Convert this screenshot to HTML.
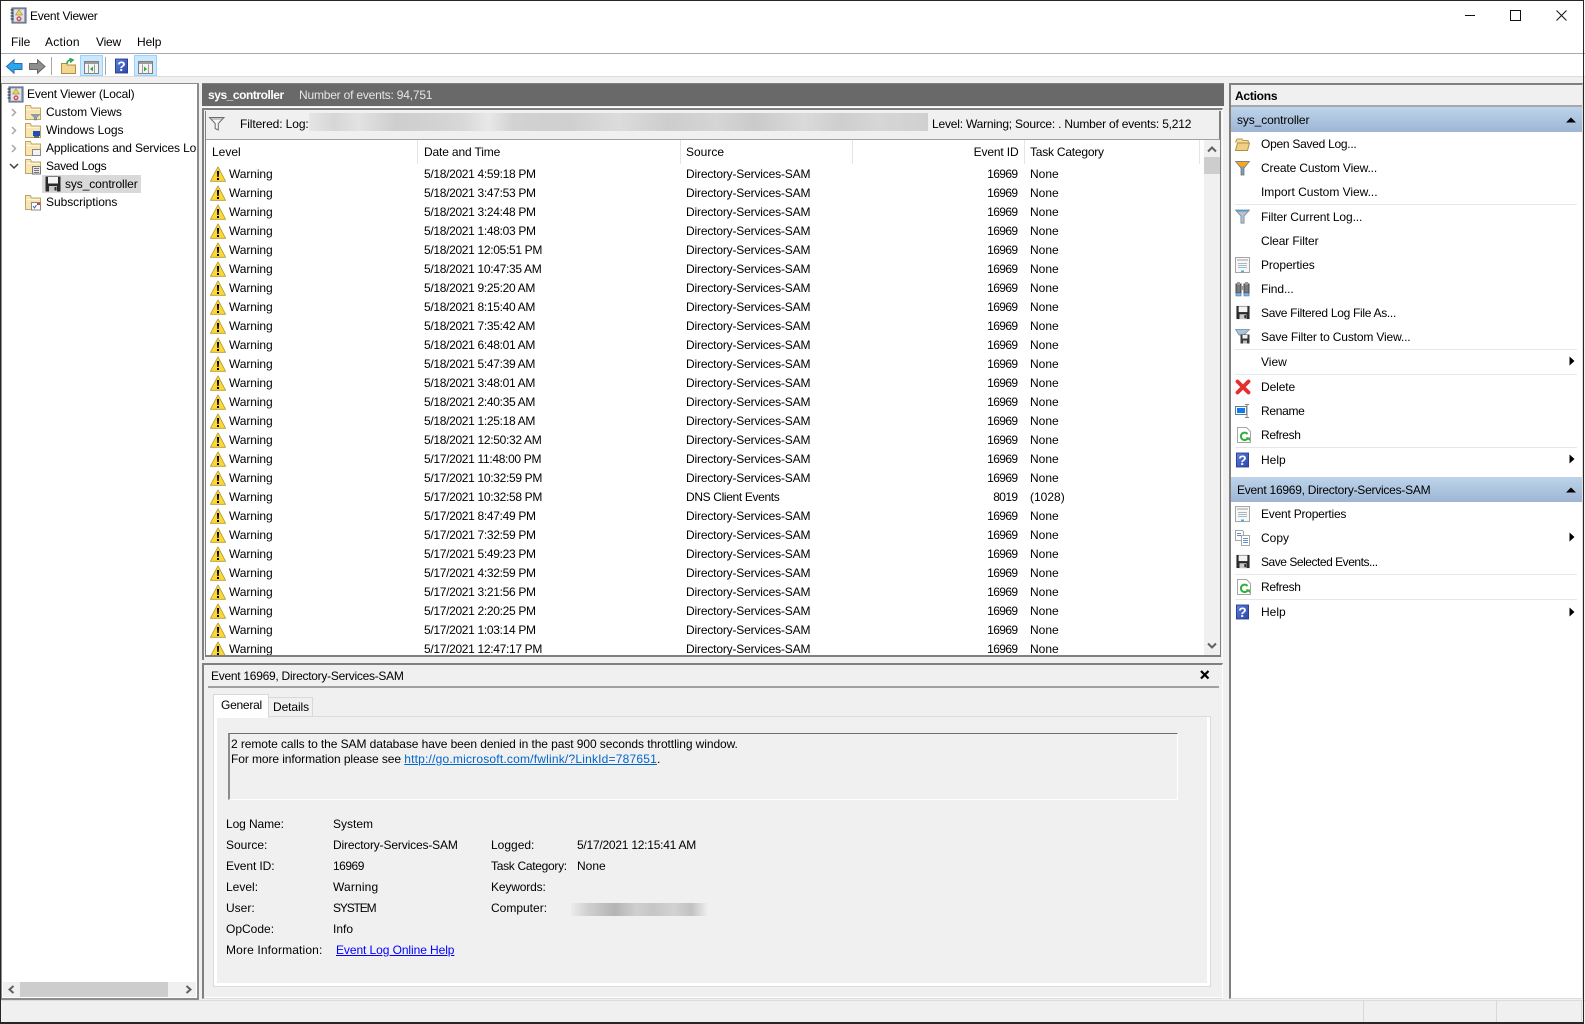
<!DOCTYPE html>
<html><head><meta charset="utf-8"><title>Event Viewer</title>
<style>
*{box-sizing:border-box}
html,body{margin:0;padding:0}
body{width:1585px;height:1024px;overflow:hidden;background:#f0f0f0;position:relative;font:12px/16px "Liberation Sans",sans-serif;color:#000}
.a,.t,svg.i{position:absolute}
.t{white-space:nowrap}
svg.i{overflow:visible}
.row{position:absolute;left:0;height:19px;width:1000px}
.row .t{top:1px}
.w{left:23px;letter-spacing:-.1px}
.dt{left:218px;letter-spacing:-.32px}
.src{left:480px;letter-spacing:-.17px}
.id{left:660px;width:151.500px;text-align:right;letter-spacing:-.6px}
.cat{left:824px}
.sep{position:absolute;left:1235px;width:342px;height:1px;background:#e6e6e6}
.act{left:1261px}
</style></head><body>
<svg width="0" height="0" style="position:absolute"><defs>
<symbol id="warn" viewBox="0 0 16 16"><path d="M8 .8 15.600 15.300H.4Z" fill="#fdd835" stroke="#b09a30" stroke-width=".8" stroke-linejoin="round"/><path d="M6.900 5h2.200l-.4 6H7.300Z" fill="#000"/><rect x="7" y="12" width="2" height="2" fill="#000"/></symbol>
<symbol id="fold" viewBox="0 0 16 16"><path d="M.5 1.500h5l1 2.500h9v11.500H.5Z" fill="#f8e6b0" stroke="#bfa468"/><path d="M1.500 5.500h13" stroke="#fff6da"/></symbol>
<symbol id="book" viewBox="0 0 17 17"><rect x="2" y="1" width="14" height="15" fill="#9aa6bc" stroke="#4d5a76"/><rect x="4" y="2.500" width="10" height="12" fill="#dfe4ec"/><path d="M.5 3h3M.5 6h3M.5 9h3M.5 12h3" stroke="#333"/><path d="M9 2.500 12.500 8H5.500Z" fill="#f5d24a" stroke="#8a7228" stroke-width=".5"/><circle cx="9" cy="11.800" r="2.200" fill="#d85c5c" stroke="#a33" stroke-width=".5"/><circle cx="9" cy="11.800" r=".9" fill="#fff"/></symbol>
<symbol id="floppy" viewBox="0 0 16 16"><path d="M.5.500h15v15H.5Z" fill="#2b2b2b"/><rect x="3" y="1" width="10" height="6.500" fill="#f4f4f4"/><rect x="4" y="10" width="8" height="5.500" fill="#c9c9c9"/><rect x="9.500" y="11" width="2" height="3.500" fill="#2b2b2b"/></symbol>
<symbol id="help" viewBox="0 0 14 16"><defs><linearGradient id="hg" x1="0" y1="0" x2="1" y2="1"><stop offset="0" stop-color="#5b7fe0"/><stop offset="1" stop-color="#2c46a8"/></linearGradient></defs><rect x=".5" y=".5" width="13" height="15" fill="url(#hg)" stroke="#2a3f8e"/><text x="7" y="13.500" text-anchor="middle" font-family="Liberation Sans" font-weight="700" font-size="15" fill="#fff">?</text></symbol>
<symbol id="funnel" viewBox="0 0 16 16"><path d="M.5 1h15L9.700 7.500V15H6.300V7.500Z" fill="#b4c1ce" stroke="#6f8295" stroke-width=".8"/><path d="M1 2h14" stroke="#5a9cc8" stroke-width="1.500"/></symbol>
<symbol id="refresh" viewBox="0 0 14 16"><path d="M.5.500h9l4 4v11H.5Z" fill="#fff" stroke="#a6a6a6"/><path d="M10.500 7a3.700 3.700 0 1 0 .6 3.500" fill="none" stroke="#2faf3c" stroke-width="2"/><path d="M8.500 10.500h4.500v3.500Z" fill="#2faf3c"/></symbol>
<symbol id="props" viewBox="0 0 15 16"><rect x=".5" y=".5" width="14" height="15" fill="#f7f7f7" stroke="#a6a6a6"/><rect x="2" y="2" width="11" height="2" fill="#cccccc"/><path d="M3 6.500h9M3 8.500h9M3 10.500h9" stroke="#aab8c6"/><rect x="6" y="13.500" width="3" height="2" fill="#3fb2e8"/></symbol>
</defs></svg>

<!-- window frame -->
<div class="a" style="left:0;top:0;width:1585px;height:76px;background:#fff"></div>
<div class="a" style="left:0;top:53px;width:1585px;height:1px;background:#a8a8b0"></div>
<div class="a" style="left:0;top:76px;width:1585px;height:1px;background:#dcdcdc"></div>

<svg class="i" style="left:10px;top:7px" width="17" height="17"><use href="#book"/></svg>
<div class="t" style="left:30px;top:8px;letter-spacing:-.25px">Event Viewer</div>
<svg class="i" style="left:1465px;top:10px" width="60" height="12"><path d="M0 5.500h10" stroke="#111"/></svg>
<svg class="i" style="left:1510px;top:10px" width="12" height="12"><rect x=".5" y=".5" width="10" height="10" fill="none" stroke="#111"/></svg>
<svg class="i" style="left:1556px;top:10px" width="12" height="12"><path d="M.5.500 10.500 10.500M10.500.500.5 10.500" stroke="#111"/></svg>

<div class="t" style="left:11px;top:34px">File</div>
<div class="t" style="left:45px;top:34px;letter-spacing:.25px">Action</div>
<div class="t" style="left:96px;top:34px;letter-spacing:-.2px">View</div>
<div class="t" style="left:137px;top:34px;letter-spacing:-.1px">Help</div>

<!-- toolbar -->
<svg class="i" style="left:6px;top:59px" width="17" height="15"><path d="M.5 7.500 8 .8V4.500H16V10.500H8V14.200Z" fill="#2aa5ef" stroke="#2c6fa8"/></svg>
<svg class="i" style="left:29px;top:59px" width="17" height="15"><path d="M16 7.500 8.500.8V4.500H.5V10.500H8.500V14.200Z" fill="#8f8f8f" stroke="#666"/></svg>
<div class="a" style="left:51px;top:57px;width:1px;height:18px;background:#a8a8a8"></div>
<svg class="i" style="left:61px;top:58px" width="15" height="16"><path d="M.5 5.500h5l1 1.500h8v8.500H.5Z" fill="#f3d78e" stroke="#b08f45"/><path d="M6 6 C6 3 8 2 10 2M8.500 .5 12 2 9 4.500" fill="none" stroke="#2aa04a" stroke-width="1.500"/></svg>
<div class="a" style="left:80px;top:55px;width:23px;height:21px;background:#cce8ff;border:1px solid #99d1ff"></div>
<svg class="i" style="left:84px;top:61px" width="15" height="13"><rect x=".5" y=".5" width="14" height="12" fill="#f4f4f4" stroke="#7f7f7f"/><rect x="1" y="1" width="13" height="2" fill="#9a9a9a"/><path d="M4.500 3.500v9M10.500 3.500v9" stroke="#9a9a9a"/><path d="M9 5.500v5L6 8Z" fill="#2fae3a"/></svg>
<div class="a" style="left:105px;top:57px;width:1px;height:18px;background:#a8a8a8"></div>
<svg class="i" style="left:115px;top:58px" width="13" height="16"><use href="#help"/></svg>
<div class="a" style="left:134px;top:55px;width:23px;height:21px;background:#cce8ff;border:1px solid #99d1ff"></div>
<svg class="i" style="left:138px;top:61px" width="15" height="13"><rect x=".5" y=".5" width="14" height="12" fill="#f4f4f4" stroke="#7f7f7f"/><rect x="1" y="1" width="13" height="2" fill="#9a9a9a"/><path d="M4.500 3.500v9M10.500 3.500v9" stroke="#9a9a9a"/><path d="M6 5.500v5L9 8Z" fill="#2fae3a"/></svg>

<!-- left tree pane -->
<div class="a" style="left:1px;top:83px;width:198px;height:917px;background:#fff;border:1px solid #8c8c8c;border-width:1px 2px 2px 1px"></div>
<svg class="i" style="left:7px;top:86px" width="17" height="17"><use href="#book"/></svg>
<div class="t" style="left:27px;top:86px;letter-spacing:-.15px">Event Viewer (Local)</div>
<svg class="i" style="left:11px;top:108px" width="6" height="60" fill="none"><path d="M1 1l3.500 3.500L1 8M1 19l3.500 3.500L1 26M1 37l3.500 3.500L1 44" stroke="#a6a6a6" stroke-width="1.500"/></svg>
<svg class="i" style="left:9px;top:163px" width="10" height="7" fill="none"><path d="M1 1l4 4 4-4" stroke="#404040" stroke-width="1.500"/></svg>
<svg class="i" style="left:25px;top:104px" width="16" height="16"><use href="#fold"/><path d="M6 10.500h9l-3.300 3v2.500h-2.400v-2.500Z" fill="#8fa2b5" stroke="#5f7285" stroke-width=".5"/></svg>
<svg class="i" style="left:25px;top:122px" width="16" height="16"><use href="#fold"/><rect x="8" y="9" width="7" height="5" fill="#1d4fb8"/><rect x="9" y="14" width="5" height="2" fill="#666"/></svg>
<svg class="i" style="left:25px;top:140px" width="16" height="16"><use href="#fold"/><rect x="7.500" y="9.500" width="8" height="6" fill="#f3f3f3" stroke="#888"/></svg>
<svg class="i" style="left:25px;top:158px" width="16" height="16"><use href="#fold"/><rect x="7.500" y="8.500" width="8" height="7.500" fill="#e8e8e8" stroke="#777"/><path d="M9 10.500h5M9 12.500h5M9 14.500h5" stroke="#777"/></svg>
<svg class="i" style="left:25px;top:194px" width="16" height="16"><use href="#fold"/><rect x="6.500" y="8.500" width="9" height="7.500" fill="#fff" stroke="#888"/><path d="M8 12l1.500 2 2-3" fill="none" stroke="#3366c0"/><rect x="12" y="9" width="3" height="2" fill="#d04040"/></svg>
<div class="t" style="left:46px;top:104px;letter-spacing:-.05px">Custom Views</div>
<div class="t" style="left:46px;top:122px;letter-spacing:-.05px">Windows Logs</div>
<div class="a" style="left:46px;top:140px;width:150px;height:16px;overflow:hidden"><span class="t" style="left:0;top:0;letter-spacing:-.14px">Applications and Services Logs</span></div>
<div class="t" style="left:46px;top:158px;letter-spacing:-.3px">Saved Logs</div>
<div class="a" style="left:42px;top:175px;width:99px;height:18px;background:#d9d9d9"></div>
<svg class="i" style="left:45px;top:176px" width="16" height="16"><use href="#floppy"/></svg>
<div class="t" style="left:65px;top:176px;letter-spacing:-.1px">sys_controller</div>
<div class="t" style="left:46px;top:194px;letter-spacing:-.05px">Subscriptions</div>
<div class="a" style="left:3px;top:982px;width:193px;height:15px;background:#f0f0f0"></div>
<div class="a" style="left:20px;top:982px;width:148px;height:15px;background:#cdcdcd"></div>
<svg class="i" style="left:8px;top:985px" width="7" height="10" fill="none"><path d="M5.500 1 1.500 4.500 5.500 8" stroke="#606060" stroke-width="2"/></svg>
<svg class="i" style="left:185px;top:985px" width="7" height="10" fill="none"><path d="M1.500 1 5.500 4.500 1.500 8" stroke="#606060" stroke-width="2"/></svg>

<!-- center header -->
<div class="a" style="left:202px;top:83px;width:1022px;height:23px;background:#696969;border-top:1px solid #808080"></div>
<div class="t" style="left:208px;top:87px;color:#fff;font-weight:700;letter-spacing:-.45px">sys_controller</div>
<div class="t" style="left:299px;top:87px;color:#e6e6e6;letter-spacing:-.2px">Number of events: 94,751</div>

<!-- list frame -->
<div class="a" style="left:202px;top:107px;width:1022px;height:553px;background:#f0f0f0;border:1px solid #fff;border-width:1px 0 0 0"></div>
<div class="a" style="left:202px;top:108px;width:1021px;height:552px;border-left:2px solid #808080;border-top:2px solid #808080;border-right:1px solid #fff"></div>
<div class="a" style="left:205px;top:111px;width:1016px;height:546px;background:#f0f0f0;border-left:1px solid #808080;border-right:2px solid #808080;border-bottom:2px solid #808080"></div>
<svg class="i" style="left:209px;top:117px" width="16" height="14"><path d="M.5 .5h14.500L9.300 6.500v6.500L6.200 11.500V6.500Z" fill="#f7f7f7" stroke="#6b6b6b"/><path d="M2.500 2h10.500" stroke="#9a9a9a"/></svg>
<div class="t" style="left:240px;top:116px;letter-spacing:-.1px">Filtered: Log:</div>
<div class="a" style="left:309px;top:113px;width:619px;height:18px;background:linear-gradient(90deg,#e6e6e6 0,#d6d6d6 4%,#e2e2e2 8%,#cecece 14%,#d2d2d2 20%,#d8d8d8 25%,#e8e8e8 29%,#d2d2d2 33%,#cfcfcf 42%,#dcdcdc 50%,#cdcdcd 58%,#d5d5d5 66%,#cacaca 72%,#dadada 80%,#cecece 86%,#d6d6d6 92%,#d0d0d0 100%)"></div>
<div class="t" style="left:932px;top:116px;letter-spacing:-.2px">Level: Warning; Source: . Number of events: 5,212</div>
<div class="a" style="left:206px;top:139px;width:1014px;height:1px;background:#a0a0a0"></div>

<!-- list -->
<div class="a" style="left:206px;top:140px;width:1014px;height:515px;background:#fff;overflow:hidden" id="list">
<div class="t" style="left:6px;top:4px">Level</div>
<div class="t" style="left:218px;top:4px;letter-spacing:-.15px">Date and Time</div>
<div class="t" style="left:480px;top:4px">Source</div>
<div class="t" style="left:660px;top:4px;width:152.500px;text-align:right;letter-spacing:-.15px">Event ID</div>
<div class="t" style="left:824px;top:4px;letter-spacing:-.22px">Task Category</div>
<div class="a" style="left:211px;top:0;width:1px;height:24px;background:#e5e5e5"></div>
<div class="a" style="left:474px;top:0;width:1px;height:24px;background:#e5e5e5"></div>
<div class="a" style="left:646px;top:0;width:1px;height:24px;background:#e5e5e5"></div>
<div class="a" style="left:818px;top:0;width:1px;height:24px;background:#e5e5e5"></div>
<div class="a" style="left:993px;top:0;width:1px;height:24px;background:#e5e5e5"></div>

<div class="row" style="top:25px"><svg class="i" style="left:4px;top:1px" width="16" height="16"><use href="#warn"/></svg><div class="t w">Warning</div><div class="t dt">5/18/2021 4:59:18 PM</div><div class="t src">Directory-Services-SAM</div><div class="t id">16969</div><div class="t cat">None</div></div>
<div class="row" style="top:44px"><svg class="i" style="left:4px;top:1px" width="16" height="16"><use href="#warn"/></svg><div class="t w">Warning</div><div class="t dt">5/18/2021 3:47:53 PM</div><div class="t src">Directory-Services-SAM</div><div class="t id">16969</div><div class="t cat">None</div></div>
<div class="row" style="top:63px"><svg class="i" style="left:4px;top:1px" width="16" height="16"><use href="#warn"/></svg><div class="t w">Warning</div><div class="t dt">5/18/2021 3:24:48 PM</div><div class="t src">Directory-Services-SAM</div><div class="t id">16969</div><div class="t cat">None</div></div>
<div class="row" style="top:82px"><svg class="i" style="left:4px;top:1px" width="16" height="16"><use href="#warn"/></svg><div class="t w">Warning</div><div class="t dt">5/18/2021 1:48:03 PM</div><div class="t src">Directory-Services-SAM</div><div class="t id">16969</div><div class="t cat">None</div></div>
<div class="row" style="top:101px"><svg class="i" style="left:4px;top:1px" width="16" height="16"><use href="#warn"/></svg><div class="t w">Warning</div><div class="t dt">5/18/2021 12:05:51 PM</div><div class="t src">Directory-Services-SAM</div><div class="t id">16969</div><div class="t cat">None</div></div>
<div class="row" style="top:120px"><svg class="i" style="left:4px;top:1px" width="16" height="16"><use href="#warn"/></svg><div class="t w">Warning</div><div class="t dt">5/18/2021 10:47:35 AM</div><div class="t src">Directory-Services-SAM</div><div class="t id">16969</div><div class="t cat">None</div></div>
<div class="row" style="top:139px"><svg class="i" style="left:4px;top:1px" width="16" height="16"><use href="#warn"/></svg><div class="t w">Warning</div><div class="t dt">5/18/2021 9:25:20 AM</div><div class="t src">Directory-Services-SAM</div><div class="t id">16969</div><div class="t cat">None</div></div>
<div class="row" style="top:158px"><svg class="i" style="left:4px;top:1px" width="16" height="16"><use href="#warn"/></svg><div class="t w">Warning</div><div class="t dt">5/18/2021 8:15:40 AM</div><div class="t src">Directory-Services-SAM</div><div class="t id">16969</div><div class="t cat">None</div></div>
<div class="row" style="top:177px"><svg class="i" style="left:4px;top:1px" width="16" height="16"><use href="#warn"/></svg><div class="t w">Warning</div><div class="t dt">5/18/2021 7:35:42 AM</div><div class="t src">Directory-Services-SAM</div><div class="t id">16969</div><div class="t cat">None</div></div>
<div class="row" style="top:196px"><svg class="i" style="left:4px;top:1px" width="16" height="16"><use href="#warn"/></svg><div class="t w">Warning</div><div class="t dt">5/18/2021 6:48:01 AM</div><div class="t src">Directory-Services-SAM</div><div class="t id">16969</div><div class="t cat">None</div></div>
<div class="row" style="top:215px"><svg class="i" style="left:4px;top:1px" width="16" height="16"><use href="#warn"/></svg><div class="t w">Warning</div><div class="t dt">5/18/2021 5:47:39 AM</div><div class="t src">Directory-Services-SAM</div><div class="t id">16969</div><div class="t cat">None</div></div>
<div class="row" style="top:234px"><svg class="i" style="left:4px;top:1px" width="16" height="16"><use href="#warn"/></svg><div class="t w">Warning</div><div class="t dt">5/18/2021 3:48:01 AM</div><div class="t src">Directory-Services-SAM</div><div class="t id">16969</div><div class="t cat">None</div></div>
<div class="row" style="top:253px"><svg class="i" style="left:4px;top:1px" width="16" height="16"><use href="#warn"/></svg><div class="t w">Warning</div><div class="t dt">5/18/2021 2:40:35 AM</div><div class="t src">Directory-Services-SAM</div><div class="t id">16969</div><div class="t cat">None</div></div>
<div class="row" style="top:272px"><svg class="i" style="left:4px;top:1px" width="16" height="16"><use href="#warn"/></svg><div class="t w">Warning</div><div class="t dt">5/18/2021 1:25:18 AM</div><div class="t src">Directory-Services-SAM</div><div class="t id">16969</div><div class="t cat">None</div></div>
<div class="row" style="top:291px"><svg class="i" style="left:4px;top:1px" width="16" height="16"><use href="#warn"/></svg><div class="t w">Warning</div><div class="t dt">5/18/2021 12:50:32 AM</div><div class="t src">Directory-Services-SAM</div><div class="t id">16969</div><div class="t cat">None</div></div>
<div class="row" style="top:310px"><svg class="i" style="left:4px;top:1px" width="16" height="16"><use href="#warn"/></svg><div class="t w">Warning</div><div class="t dt">5/17/2021 11:48:00 PM</div><div class="t src">Directory-Services-SAM</div><div class="t id">16969</div><div class="t cat">None</div></div>
<div class="row" style="top:329px"><svg class="i" style="left:4px;top:1px" width="16" height="16"><use href="#warn"/></svg><div class="t w">Warning</div><div class="t dt">5/17/2021 10:32:59 PM</div><div class="t src">Directory-Services-SAM</div><div class="t id">16969</div><div class="t cat">None</div></div>
<div class="row" style="top:348px"><svg class="i" style="left:4px;top:1px" width="16" height="16"><use href="#warn"/></svg><div class="t w">Warning</div><div class="t dt">5/17/2021 10:32:58 PM</div><div class="t src" style="letter-spacing:-.35px">DNS Client Events</div><div class="t id">8019</div><div class="t cat">(1028)</div></div>
<div class="row" style="top:367px"><svg class="i" style="left:4px;top:1px" width="16" height="16"><use href="#warn"/></svg><div class="t w">Warning</div><div class="t dt">5/17/2021 8:47:49 PM</div><div class="t src">Directory-Services-SAM</div><div class="t id">16969</div><div class="t cat">None</div></div>
<div class="row" style="top:386px"><svg class="i" style="left:4px;top:1px" width="16" height="16"><use href="#warn"/></svg><div class="t w">Warning</div><div class="t dt">5/17/2021 7:32:59 PM</div><div class="t src">Directory-Services-SAM</div><div class="t id">16969</div><div class="t cat">None</div></div>
<div class="row" style="top:405px"><svg class="i" style="left:4px;top:1px" width="16" height="16"><use href="#warn"/></svg><div class="t w">Warning</div><div class="t dt">5/17/2021 5:49:23 PM</div><div class="t src">Directory-Services-SAM</div><div class="t id">16969</div><div class="t cat">None</div></div>
<div class="row" style="top:424px"><svg class="i" style="left:4px;top:1px" width="16" height="16"><use href="#warn"/></svg><div class="t w">Warning</div><div class="t dt">5/17/2021 4:32:59 PM</div><div class="t src">Directory-Services-SAM</div><div class="t id">16969</div><div class="t cat">None</div></div>
<div class="row" style="top:443px"><svg class="i" style="left:4px;top:1px" width="16" height="16"><use href="#warn"/></svg><div class="t w">Warning</div><div class="t dt">5/17/2021 3:21:56 PM</div><div class="t src">Directory-Services-SAM</div><div class="t id">16969</div><div class="t cat">None</div></div>
<div class="row" style="top:462px"><svg class="i" style="left:4px;top:1px" width="16" height="16"><use href="#warn"/></svg><div class="t w">Warning</div><div class="t dt">5/17/2021 2:20:25 PM</div><div class="t src">Directory-Services-SAM</div><div class="t id">16969</div><div class="t cat">None</div></div>
<div class="row" style="top:481px"><svg class="i" style="left:4px;top:1px" width="16" height="16"><use href="#warn"/></svg><div class="t w">Warning</div><div class="t dt">5/17/2021 1:03:14 PM</div><div class="t src">Directory-Services-SAM</div><div class="t id">16969</div><div class="t cat">None</div></div>
<div class="row" style="top:500px"><svg class="i" style="left:4px;top:1px" width="16" height="16"><use href="#warn"/></svg><div class="t w">Warning</div><div class="t dt">5/17/2021 12:47:17 PM</div><div class="t src">Directory-Services-SAM</div><div class="t id">16969</div><div class="t cat">None</div></div>

<div class="a" style="left:998px;top:0;width:16px;height:515px;background:#f0f0f0"></div>
<div class="a" style="left:998px;top:17px;width:16px;height:17px;background:#cdcdcd"></div>
<svg class="i" style="left:1001px;top:6px" width="10" height="7" fill="none"><path d="M1 5.500 5 1.500 9 5.500" stroke="#606060" stroke-width="2"/></svg>
<svg class="i" style="left:1001px;top:502px" width="10" height="7" fill="none"><path d="M1 1.500 5 5.500 9 1.500" stroke="#606060" stroke-width="2"/></svg>
</div>

<!-- detail panel -->
<div class="a" style="left:202px;top:663px;width:1021px;height:336px;background:#f0f0f0;border-top:2px solid #808080;border-left:2px solid #808080;border-right:1px solid #fff;border-bottom:1px solid #dcdcdc"></div>
<div class="a" style="left:205px;top:997px;width:1018px;height:1px;background:#fff"></div>
<div class="t" style="left:211px;top:668px;letter-spacing:-.27px">Event 16969, Directory-Services-SAM</div>
<svg class="i" style="left:1200px;top:670px" width="10" height="10" fill="none"><path d="M1 1 8.500 8.500M8.500 1 1 8.500" stroke="#000" stroke-width="2.200"/></svg>
<div class="a" style="left:208px;top:686px;width:1011px;height:2px;background:#a0a0a0"></div>

<div class="a" style="left:213px;top:716px;width:998px;height:271px;background:#f0f0f0;border:1px solid #dcdcdc;box-shadow:inset 3px 0 0 #fff,inset -3px 0 0 #fff,inset 0 -3px 0 #fff"></div>
<div class="a" style="left:268px;top:697px;width:45px;height:20px;background:#f0f0f0;border:1px solid #d9d9d9"></div>
<div class="t" style="left:273px;top:699px;letter-spacing:-.1px">Details</div>
<div class="a" style="left:213px;top:694px;width:56px;height:24px;background:#fff;border:1px solid #d9d9d9;border-bottom:0"></div>
<div class="t" style="left:221px;top:697px;letter-spacing:-.25px">General</div>

<div class="a" style="left:228px;top:733px;width:950px;height:67px;border-style:solid;border-width:1px 1px 1px 2px;border-color:#6e6e6e #fff #fff #8c8c8c"></div>
<div class="t" style="left:231px;top:736px;letter-spacing:-.08px">2 remote calls to the SAM database have been denied in the past 900 seconds throttling window.</div>
<div class="t" style="left:231px;top:751px;letter-spacing:-.09px">For more information please see <span style="color:#0066cc;text-decoration:underline;letter-spacing:.2px">http://go.microsoft.com/fwlink/?LinkId=787651</span>.</div>

<div class="t" style="left:226px;top:816px;letter-spacing:-.1px">Log Name:</div><div class="t" style="left:333px;top:816px">System</div>
<div class="t" style="left:226px;top:837px">Source:</div><div class="t" style="left:333px;top:837px;letter-spacing:-.15px">Directory-Services-SAM</div>
<div class="t" style="left:491px;top:837px">Logged:</div><div class="t" style="left:577px;top:837px;letter-spacing:-.24px">5/17/2021 12:15:41 AM</div>
<div class="t" style="left:226px;top:858px;letter-spacing:-.1px">Event ID:</div><div class="t" style="left:333px;top:858px;letter-spacing:-.5px">16969</div>
<div class="t" style="left:491px;top:858px;letter-spacing:-.3px">Task Category:</div><div class="t" style="left:577px;top:858px">None</div>
<div class="t" style="left:226px;top:879px">Level:</div><div class="t" style="left:333px;top:879px;letter-spacing:.15px">Warning</div>
<div class="t" style="left:491px;top:879px;letter-spacing:-.15px">Keywords:</div>
<div class="t" style="left:226px;top:900px">User:</div><div class="t" style="left:333px;top:900px;letter-spacing:-1.150px">SYSTEM</div>
<div class="t" style="left:491px;top:900px">Computer:</div>
<div class="a" style="left:571px;top:903px;width:137px;height:13px;background:linear-gradient(90deg,#ececec 0,#d0d0d0 12%,#b4b4b4 32%,#cfcfcf 48%,#c6c6c6 60%,#d2d2d2 75%,#c2c2c2 88%,#f0f0f0 100%)"></div>
<div class="t" style="left:226px;top:921px">OpCode:</div><div class="t" style="left:333px;top:921px">Info</div>
<div class="t" style="left:226px;top:942px;letter-spacing:.14px">More Information:</div><div class="t" style="left:336px;top:942px;color:#0000ff;text-decoration:underline;letter-spacing:-.08px">Event Log Online Help</div>

<!-- actions pane -->
<div class="a" style="left:1229px;top:83px;width:354px;height:916px;background:#fff;border-left:2px solid #808080;border-top:2px solid #808080;border-right:1px solid #dcdcdc;border-bottom:1px solid #dcdcdc"></div>
<div class="a" style="left:1231px;top:85px;width:351px;height:20px;background:#f0f0f0"></div>
<div class="t" style="left:1235px;top:88px;font-weight:700;letter-spacing:-.25px">Actions</div>
<div class="a" style="left:1231px;top:105px;width:351px;height:2px;background:#a8a8a8"></div>
<div class="a" style="left:1231px;top:107px;width:351px;height:25px;background:linear-gradient(#bed4eb,#9db6d4)"></div>
<div class="t" style="left:1237px;top:112px;letter-spacing:-.12px">sys_controller</div>
<svg class="i" style="left:1566px;top:117px" width="10" height="6"><path d="M0 5.500 5 .5 10 5.500Z" fill="#000"/></svg>
<div class="a" style="left:1231px;top:477px;width:351px;height:25px;background:linear-gradient(#bed4eb,#9db6d4)"></div>
<div class="t" style="left:1237px;top:482px;letter-spacing:-.25px">Event 16969, Directory-Services-SAM</div>
<svg class="i" style="left:1566px;top:487px" width="10" height="6"><path d="M0 5.500 5 .5 10 5.500Z" fill="#000"/></svg>

<div class="sep" style="top:204px"></div><div class="sep" style="top:349px"></div><div class="sep" style="top:374px"></div><div class="sep" style="top:447px"></div><div class="sep" style="top:574px"></div><div class="sep" style="top:599px"></div>

<svg class="i" style="left:1235px;top:138px" width="15" height="13"><path d="M.5 4.500 2 1h5l1 1.500h5l.5 2" fill="#f3dc9b" stroke="#b69a55"/><path d="M.5 12.500 2.500 5h12l-2 7.500Z" fill="#f0d184" stroke="#b08f45"/></svg>
<svg class="i" style="left:1235px;top:161px" width="15" height="15"><path d="M.5.500h14L9 7v7H6V7Z" fill="#8a9aad" stroke="#5c6b7c" stroke-width=".7"/><path d="M1 1h13L9.500 5.500h-4Z" fill="#f9a81d"/></svg>
<svg class="i" style="left:1235px;top:209px" width="15" height="15"><use href="#funnel"/></svg>
<svg class="i" style="left:1235px;top:257px" width="15" height="16"><use href="#props"/></svg>
<svg class="i" style="left:1235px;top:281px" width="16" height="16"><path d="M1 3h5v9H1ZM9 3h5v9H9Z" fill="#7a7a7a" stroke="#444"/><path d="M2 1h3v3H2ZM10 1h3v3h-3ZM6 5h3v4H6Z" fill="#999"/><path d="M1 12h5v3H1ZM9 12h5v3H9Z" fill="#7cb6e8" stroke="#3a6a98" stroke-width=".6"/></svg>
<svg class="i" style="left:1236px;top:305px" width="14" height="15"><use href="#floppy"/></svg>
<svg class="i" style="left:1235px;top:329px" width="16" height="15"><path d="M.5.500h14L9 6H4Z" fill="#a9c3d8" stroke="#6d8ba6" stroke-width=".7"/><rect x="5.500" y="5.500" width="9" height="9" fill="#3a3a3a"/><rect x="7.500" y="6" width="5" height="3.500" fill="#f2f2f2"/><rect x="8" y="11.500" width="4" height="3" fill="#bbb"/></svg>
<svg class="i" style="left:1235px;top:379px" width="16" height="16"><path d="M2.500 2.500 13.500 13.500M13.500 2.500 2.500 13.500" stroke="#e53030" stroke-width="3.800" stroke-linecap="round"/></svg>
<svg class="i" style="left:1235px;top:404px" width="16" height="14"><rect x=".5" y="2.500" width="11" height="8" fill="#fff" stroke="#5f7b98"/><rect x="2" y="4" width="8" height="5" fill="#0f7bef"/><path d="M12 .5v13M10 .5h4M10 13.500h4" stroke="#888" fill="none"/></svg>
<svg class="i" style="left:1237px;top:427px" width="14" height="16"><use href="#refresh"/></svg>
<svg class="i" style="left:1236px;top:452px" width="13" height="16"><use href="#help"/></svg>
<svg class="i" style="left:1235px;top:506px" width="15" height="16"><use href="#props"/></svg>
<svg class="i" style="left:1235px;top:530px" width="16" height="16"><path d="M.5.500h7l1 1v9H.5Z" fill="#fff" stroke="#a6a6a6"/><path d="M2 3.500h4M2 5.500h4" stroke="#5d8fcc"/><path d="M6.500 5.500h8v10h-8Z" fill="#fff" stroke="#a6a6a6"/><path d="M8 8.500h5M8 10.500h5M8 12.500h5" stroke="#5d8fcc"/></svg>
<svg class="i" style="left:1236px;top:554px" width="14" height="15"><use href="#floppy"/></svg>
<svg class="i" style="left:1237px;top:579px" width="14" height="16"><use href="#refresh"/></svg>
<svg class="i" style="left:1236px;top:604px" width="13" height="16"><use href="#help"/></svg>

<div class="t act" style="top:136px;letter-spacing:-.27px">Open Saved Log...</div>
<div class="t act" style="top:160px;letter-spacing:-.15px">Create Custom View...</div>
<div class="t act" style="top:184px;letter-spacing:-.03px">Import Custom View...</div>
<div class="t act" style="top:209px;letter-spacing:-.1px">Filter Current Log...</div>
<div class="t act" style="top:233px;letter-spacing:-.1px">Clear Filter</div>
<div class="t act" style="top:257px;letter-spacing:-.1px">Properties</div>
<div class="t act" style="top:281px;letter-spacing:-.1px">Find...</div>
<div class="t act" style="top:305px;letter-spacing:-.3px">Save Filtered Log File As...</div>
<div class="t act" style="top:329px;letter-spacing:-.15px">Save Filter to Custom View...</div>
<div class="t act" style="top:354px">View</div>
<div class="t act" style="top:379px;letter-spacing:-.1px">Delete</div>
<div class="t act" style="top:403px;letter-spacing:-.3px">Rename</div>
<div class="t act" style="top:427px;letter-spacing:-.35px">Refresh</div>
<div class="t act" style="top:452px">Help</div>
<div class="t act" style="top:506px;letter-spacing:-.22px">Event Properties</div>
<div class="t act" style="top:530px">Copy</div>
<div class="t act" style="top:554px;letter-spacing:-.47px">Save Selected Events...</div>
<div class="t act" style="top:579px;letter-spacing:-.35px">Refresh</div>
<div class="t act" style="top:604px">Help</div>
<svg class="i" style="left:1569px;top:356px" width="6" height="10"><path d="M.5.500 5.500 5 .5 9.500Z" fill="#000"/></svg>
<svg class="i" style="left:1569px;top:454px" width="6" height="10"><path d="M.5.500 5.500 5 .5 9.500Z" fill="#000"/></svg>
<svg class="i" style="left:1569px;top:532px" width="6" height="10"><path d="M.5.500 5.500 5 .5 9.500Z" fill="#000"/></svg>
<svg class="i" style="left:1569px;top:607px" width="6" height="10"><path d="M.5.500 5.500 5 .5 9.500Z" fill="#000"/></svg>

<!-- status bar -->
<div class="a" style="left:0;top:1000px;width:1585px;height:1px;background:#dcdcdc"></div>
<div class="a" style="left:1363px;top:1001px;width:1px;height:21px;background:#d9d9d9"></div>
<div class="a" style="left:1496px;top:1001px;width:1px;height:21px;background:#d9d9d9"></div>
<div class="a" style="left:1581px;top:1001px;width:1px;height:21px;background:#d9d9d9"></div>

<!-- window border -->
<div class="a" style="left:0;top:0;width:1584px;height:1024px;border:1px solid #262626;border-bottom-width:2px"></div>
</body></html>
